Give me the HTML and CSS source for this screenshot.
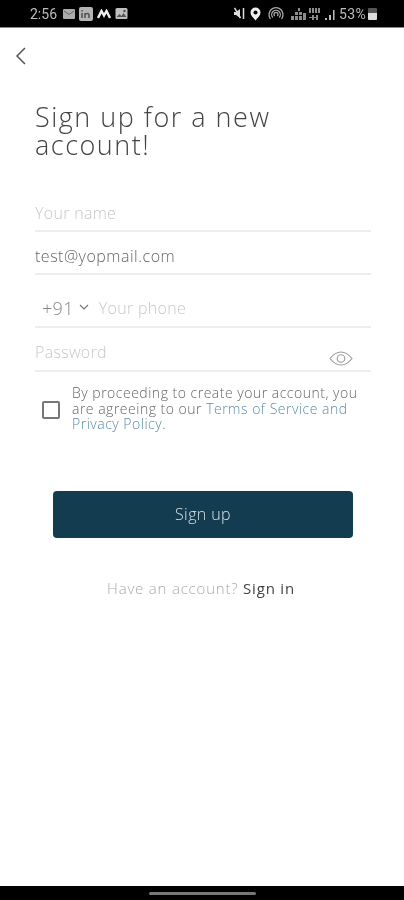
FILE: index.html
```html
<!DOCTYPE html>
<html lang="en">
<head>
    <meta charset="UTF-8">
    <meta name="viewport" content="width=device-width, initial-scale=1.0">
    <title>Sign up</title>
    <link rel="stylesheet" href="styles.css">
</head>
<body>

<div class="screen">
    <div class="status-bar">
        <div class="status-left">
            <span class="time">2:56</span>
            <svg class="notif" width="12" height="10" viewBox="0 0 12 10"><rect x="0" y="0" width="12" height="10" rx="1" fill="#aaa"/><path d="M1 2l5 3.500L11 2" stroke="#666" fill="none"/></svg>
            <svg class="notif" width="14" height="14" viewBox="0 0 14 14"><rect x="0" y="0" width="14" height="14" rx="2" fill="#b4b4b4"/><path d="M3 6v5M6 11V6M6 8c1-2 4-2 4 0v3" stroke="#555" stroke-width="1.600" fill="none"/><rect x="2.300" y="3" width="1.500" height="1.500" fill="#555"/></svg>
            <svg class="notif" width="14" height="10" viewBox="0 0 14 10"><path d="M1 9l3.500-7 2.500 4.500L9.500 2 13 9" stroke="#eee" stroke-width="2.400" fill="none"/></svg>
            <svg class="notif" width="13" height="13" viewBox="0 0 13 13"><rect x="0.500" y="1" width="12" height="11" rx="1.500" fill="#c0c0c0"/><path d="M1.500 10l3-3 2 2 2-3 3 4z" fill="#555"/><circle cx="9.500" cy="4" r="1.300" fill="#555"/></svg>
        </div>
        <div class="status-right">
            <svg width="11" height="13" viewBox="0 0 11 13"><path d="M0 5h2L6 2v9L2 8H0z" fill="#ddd"/><path d="M9.500 1v11M0.500 1l6 10" stroke="#ddd" stroke-width="1.500"/></svg>
            <svg class="pin" width="13" height="14" viewBox="0 0 13 14"><path d="M6.500 0.500a5 5 0 0 1 5 5c0 3-3 5.500-5 8-2-2.500-5-5-5-8a5 5 0 0 1 5-5z" fill="#eee"/><circle cx="6.500" cy="5.500" r="2" fill="#000"/></svg>
            <svg class="hotspot" width="16" height="14" viewBox="0 0 16 14"><path d="M2.500 12a7 7 0 1 1 11 0M4.800 10.500a4.300 4.300 0 1 1 6.400 0M6.800 9a2 2 0 1 1 2.400 0" stroke="#aaa" stroke-width="1.300" fill="none"/></svg>
            <svg class="signal" width="44" height="14" viewBox="0 0 44 14"><path d="M0 13V9h3v4zM4 13V9h3v4zM8 13V9h3v4zM12 13V6h3v7zM4 8V5h3v3zM8 8V5h3v3zM7 4V1h2v3z" fill="#8c8c8c"/><path d="M18 6V1h2v5zM21 6V1h2v5zM24 6V1h2v5zM27 6V1h2v5zM21 13V8h2v5zM25 13V8h2v5zM18 10h9v1h-9z" fill="#8c8c8c"/><path d="M34 13v-2h2v2zM38 13V8h2v5zM42 13V3h1.500v10z" fill="#bbb"/></svg>
            <span class="battery-text">53%</span>
            <span class="battery"></span>
        </div>
    </div>

    <div class="content">
        <div class="nav">
            <svg width="12" height="20" viewBox="0 0 12 20"><path d="M10 2L2 10l8 8" stroke="#555" stroke-width="1.500" fill="none"/></svg>
        </div>

        <h1>Sign up for a new account!</h1>

        <div class="field field-name"><span class="placeholder">Your name</span></div>
        <div class="field field-email"><span class="value">test@yopmail.com</span></div>
        <div class="field field-phone">
            <span class="code">+91</span>
            <svg class="chevron" width="10" height="6" viewBox="0 0 10 6"><path d="M1 1l4 4 4-4" stroke="#777" stroke-width="1.200" fill="none"/></svg>
            <span class="placeholder">Your phone</span>
        </div>
        <div class="field field-password">
            <span class="placeholder">Password</span>
            <svg class="eye" width="24" height="15" viewBox="0 0 24 15"><path d="M1 7.500C5 2.500 8.500 1 12 1s7 1.500 11 6.500C19 12.500 15.500 14 12 14S5 12.500 1 7.500z" stroke="#999" stroke-width="1.100" fill="none"/><circle cx="12" cy="7.500" r="3.800" stroke="#999" stroke-width="1.100" fill="none"/></svg>
        </div>

        <div class="terms">
            <span class="checkbox"></span>
            <p>By proceeding to create your account, you are agreeing to our <a href="#">Terms of Service and Privacy Policy</a>.</p>
        </div>

        <button class="btn">Sign up</button>

        <p class="signin">Have an account? <strong>Sign in</strong></p>
    </div>

    <div class="nav-bar"><span class="handle"></span></div>
</div>

</body>
</html>
```

FILE: styles.css
```css
body {
    margin: 0;
    font-family: "Open Sans", sans-serif;
    background-color: #fff;
    color: #555;
}
.screen {
    height: 900px;
    display: flex;
    flex-direction: column;
    overflow: hidden;
}

/* barra de estado */
.status-bar {
    height: 28px;
    flex: none;
    box-sizing: border-box;
    padding: 0 27px 0 30px;
    background-color: #000;
    border-bottom: 1px solid #888;
    display: flex;
    justify-content: space-between;
    align-items: center;
    filter: blur(0.6px);
}
.status-left, .status-right {
    display: flex;
    align-items: center;
}
.status-left {
    gap: 4px;
}
.time, .battery-text {
    font-family: "Roboto", sans-serif;
    font-size: 14px;
    color: #bbb;
}
.time {
    margin-right: 2px;
}
.pin {
    margin-left: 4px;
}
.hotspot {
    margin-left: 6px;
}
.signal {
    margin-left: 7px;
}
.battery-text {
    margin-left: 4px;
    letter-spacing: 0.3px;
}
.battery {
    width: 9px;
    height: 12px;
    margin-left: 2px;
    border-radius: 1px;
    background: linear-gradient(#555 45%, #ddd 45%);
}

/* contenido */
.content {
    flex: 1;
    padding: 0 33px 0 35px;
    filter: blur(0.4px);
}
.nav {
    height: 36px;
    padding-top: 18px;
    margin-left: -20px;
}
h1 {
    margin: 21px 0 0;
    width: 280px;
    font-size: 27px;
    font-weight: 300;
    line-height: 28px;
    letter-spacing: 1.5px;
    color: #444;
}
.field {
    box-sizing: border-box;
    border-bottom: 2px solid #eee;
    padding-bottom: 6px;
    display: flex;
    align-items: flex-end;
    font-size: 16px;
    font-weight: 300;
    letter-spacing: 0.3px;
}
.placeholder {
    color: #c8c8c8;
}
.value {
    color: #666;
    letter-spacing: 0.5px;
}
.field-name {
    height: 37px;
    margin-top: 36px;
}
.field-email {
    height: 43px;
}
.field-phone {
    height: 53px;
    padding-left: 7px;
    padding-bottom: 7px;
}
.field-phone .code {
    font-size: 18px;
    line-height: 22px;
    color: #888;
}
.chevron {
    margin: 0 10px 9px 5px;
}
.field-password {
    height: 44px;
    justify-content: space-between;
    padding-right: 18px;
    padding-bottom: 7px;
}
.eye {
    margin-bottom: -3px;
}
.terms {
    margin-top: 13px;
    margin-left: 7px;
    display: flex;
    align-items: center;
    gap: 12px;
}
.checkbox {
    flex: none;
    box-sizing: border-box;
    width: 18px;
    height: 18px;
    margin-top: 4px;
    border: 2px solid #777;
    border-radius: 2px;
}
.terms p {
    margin: 0;
    width: 292px;
    font-size: 14px;
    font-weight: 300;
    line-height: 15.5px;
    letter-spacing: 0.5px;
    color: #666;
}
.terms a {
    color: #5a8ea6;
    text-decoration: none;
}
.btn {
    display: block;
    width: 300px;
    height: 47px;
    margin: 59px 0 0 18px;
    padding: 0;
    background-color: #143c50;
    color: #d5e0e5;
    font-family: inherit;
    font-size: 16px;
    font-weight: 300;
    letter-spacing: 0.4px;
    border: none;
    border-radius: 4px;
}
.signin {
    margin: 40px 4px 0 0;
    text-align: center;
    font-size: 15px;
    font-weight: 300;
    letter-spacing: 0.8px;
    color: #aaa;
}
.signin strong {
    font-weight: 400;
    color: #444;
}

/* barra inferior */
.nav-bar {
    height: 14px;
    flex: none;
    background-color: #000;
    display: flex;
    justify-content: center;
    align-items: center;
}
.handle {
    width: 107px;
    height: 3px;
    border-radius: 2px;
    background-color: #777;
}
```
